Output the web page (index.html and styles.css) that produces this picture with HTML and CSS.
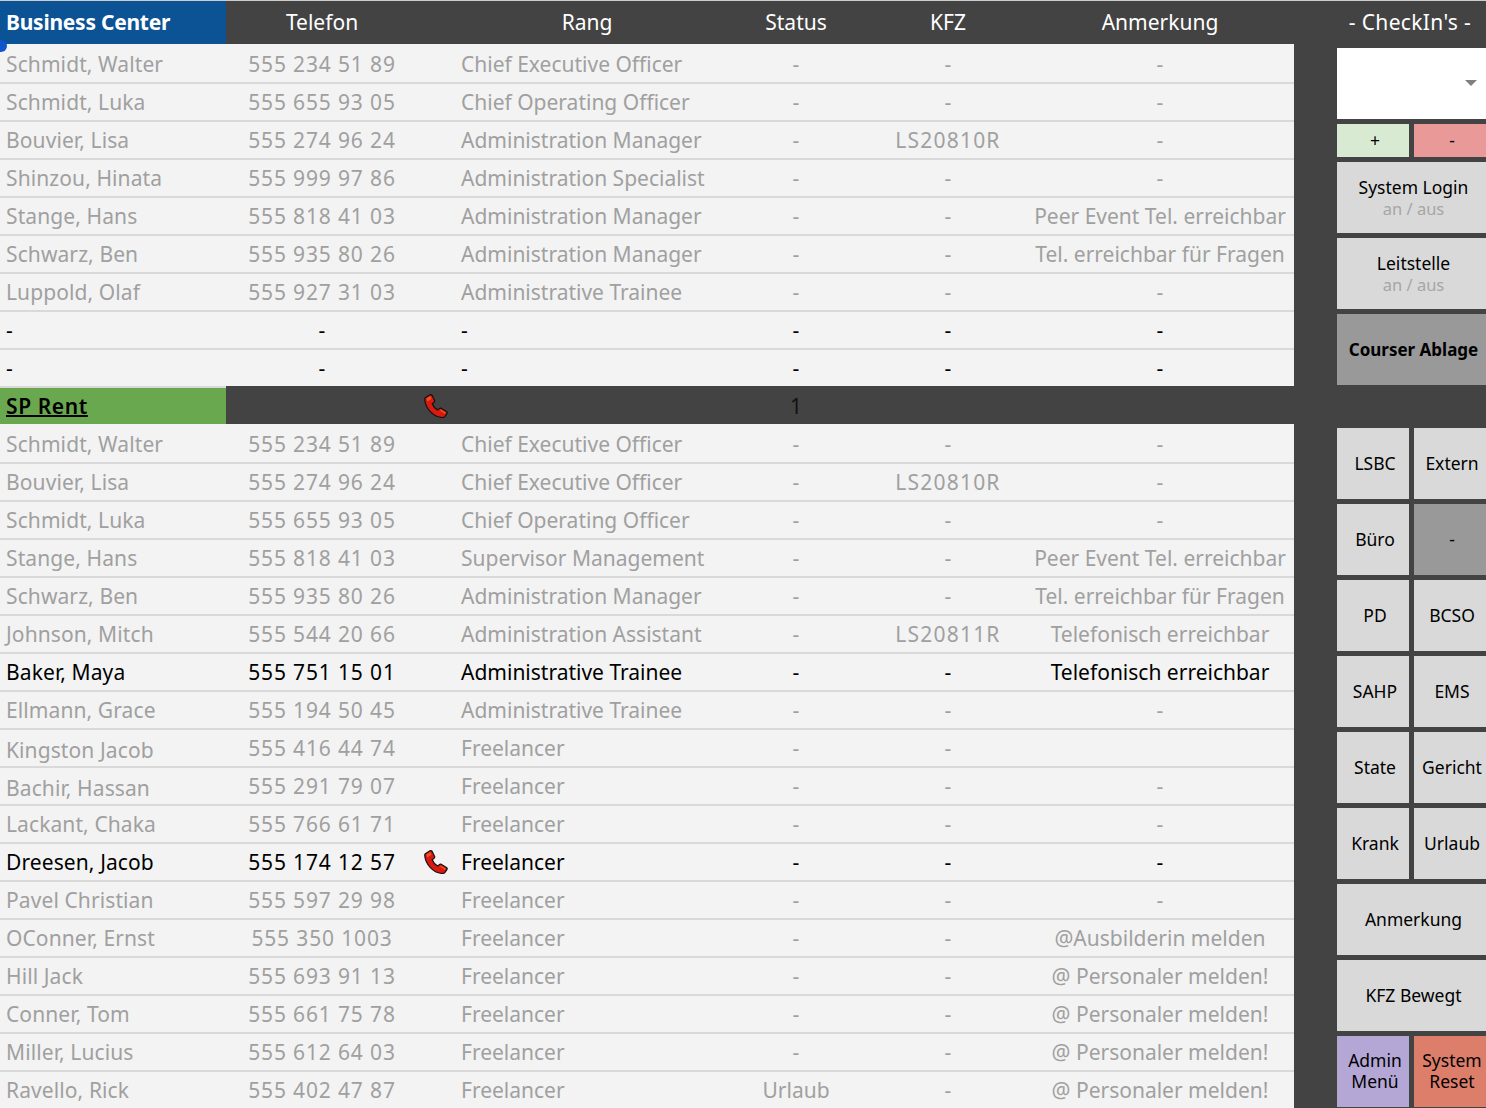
FILE: index.html
```html
<!DOCTYPE html>
<html lang="de">
<head>
<meta charset="utf-8">
<title>Business Center</title>
<link rel="stylesheet" href="styles.css">
</head>
<body>
<svg class="defs" width="0" height="0" aria-hidden="true"><defs>
<symbol id="phone" viewBox="0 0 24 24"><path d="M1 4 6 .8Q7.500 .3 8.200 1.600L10.600 6.400Q11 7.600 10 8.400L8.200 9.800Q9.500 13.500 13.600 16L15.400 14.600Q16.400 13.900 17.500 14.400L22.400 17.400Q23.600 18.200 23 19.400L21 22.400Q20 23.600 18.500 23.500C9 23 1.500 14 .8 6Q.7 4.800 1 4Z" fill="#d81a10" stroke="#111" stroke-width="1.200" stroke-linejoin="round"/><path d="M2.200 4.400 6.200 2 7.600 4.800 3.600 7.400ZM15.800 16.200 17 15.400 21.800 18.400 20.800 20Z" fill="#f0501e"/></symbol>
</defs></svg>
<div class="page">
  <header class="head">
    <div class="brand">Business Center</div>
    <div class="hc tel">Telefon</div>
    <div class="hc rang">Rang</div>
    <div class="hc">Status</div>
    <div class="hc">KFZ</div>
    <div class="hc note">Anmerkung</div>
    <div class="hc checkin">- CheckIn's -</div>
  </header>
  <span class="handle"></span>
  <div class="body">
    <main class="sheet">
      <div class="row first"><span>Schmidt, Walter</span><span class="c n">555 234 51 89</span><span></span><span>Chief Executive Officer</span><span class="c">-</span><span class="c">-</span><span class="c">-</span></div>
      <div class="row"><span>Schmidt, Luka</span><span class="c n">555 655 93 05</span><span></span><span>Chief Operating Officer</span><span class="c">-</span><span class="c">-</span><span class="c">-</span></div>
      <div class="row"><span>Bouvier, Lisa</span><span class="c n">555 274 96 24</span><span></span><span>Administration Manager</span><span class="c">-</span><span class="c n">LS20810R</span><span class="c">-</span></div>
      <div class="row"><span>Shinzou, Hinata</span><span class="c n">555 999 97 86</span><span></span><span>Administration Specialist</span><span class="c">-</span><span class="c">-</span><span class="c">-</span></div>
      <div class="row"><span>Stange, Hans</span><span class="c n">555 818 41 03</span><span></span><span>Administration Manager</span><span class="c">-</span><span class="c">-</span><span class="c">Peer Event Tel. erreichbar</span></div>
      <div class="row"><span>Schwarz, Ben</span><span class="c n">555 935 80 26</span><span></span><span>Administration Manager</span><span class="c">-</span><span class="c">-</span><span class="c">Tel. erreichbar für Fragen</span></div>
      <div class="row"><span>Luppold, Olaf</span><span class="c n">555 927 31 03</span><span></span><span>Administrative Trainee</span><span class="c">-</span><span class="c">-</span><span class="c">-</span></div>
      <div class="row on"><span>-</span><span class="c">-</span><span></span><span>-</span><span class="c">-</span><span class="c">-</span><span class="c">-</span></div>
      <div class="row on"><span>-</span><span class="c">-</span><span></span><span>-</span><span class="c">-</span><span class="c">-</span><span class="c">-</span></div>
      <div class="section"><a class="sec-name" href="#">SP Rent</a><span></span><span class="ico"><svg class="phone"><use href="#phone"/></svg></span><span></span><span class="c">1</span><span></span><span></span></div>
      <div class="row first"><span>Schmidt, Walter</span><span class="c n">555 234 51 89</span><span></span><span>Chief Executive Officer</span><span class="c">-</span><span class="c">-</span><span class="c">-</span></div>
      <div class="row"><span>Bouvier, Lisa</span><span class="c n">555 274 96 24</span><span></span><span>Chief Executive Officer</span><span class="c">-</span><span class="c n">LS20810R</span><span class="c">-</span></div>
      <div class="row"><span>Schmidt, Luka</span><span class="c n">555 655 93 05</span><span></span><span>Chief Operating Officer</span><span class="c">-</span><span class="c">-</span><span class="c">-</span></div>
      <div class="row"><span>Stange, Hans</span><span class="c n">555 818 41 03</span><span></span><span>Supervisor Management</span><span class="c">-</span><span class="c">-</span><span class="c">Peer Event Tel. erreichbar</span></div>
      <div class="row"><span>Schwarz, Ben</span><span class="c n">555 935 80 26</span><span></span><span>Administration Manager</span><span class="c">-</span><span class="c">-</span><span class="c">Tel. erreichbar für Fragen</span></div>
      <div class="row"><span>Johnson, Mitch</span><span class="c n">555 544 20 66</span><span></span><span>Administration Assistant</span><span class="c">-</span><span class="c n">LS20811R</span><span class="c">Telefonisch erreichbar</span></div>
      <div class="row on"><span>Baker, Maya</span><span class="c n">555 751 15 01</span><span></span><span>Administrative Trainee</span><span class="c">-</span><span class="c">-</span><span class="c">Telefonisch erreichbar</span></div>
      <div class="row"><span>Ellmann, Grace</span><span class="c n">555 194 50 45</span><span></span><span>Administrative Trainee</span><span class="c">-</span><span class="c">-</span><span class="c">-</span></div>
      <div class="row"><span class="low">Kingston Jacob</span><span class="c n">555 416 44 74</span><span></span><span>Freelancer</span><span class="c">-</span><span class="c">-</span><span class="c"></span></div>
      <div class="row"><span class="low">Bachir, Hassan</span><span class="c n">555 291 79 07</span><span></span><span>Freelancer</span><span class="c">-</span><span class="c">-</span><span class="c">-</span></div>
      <div class="row"><span>Lackant, Chaka</span><span class="c n">555 766 61 71</span><span></span><span>Freelancer</span><span class="c">-</span><span class="c">-</span><span class="c">-</span></div>
      <div class="row on"><span>Dreesen, Jacob</span><span class="c n">555 174 12 57</span><span class="ico"><svg class="phone"><use href="#phone"/></svg></span><span>Freelancer</span><span class="c">-</span><span class="c">-</span><span class="c">-</span></div>
      <div class="row"><span>Pavel Christian</span><span class="c n">555 597 29 98</span><span></span><span>Freelancer</span><span class="c">-</span><span class="c">-</span><span class="c">-</span></div>
      <div class="row"><span>OConner, Ernst</span><span class="c n">555 350 1003</span><span></span><span>Freelancer</span><span class="c">-</span><span class="c">-</span><span class="c">@Ausbilderin melden</span></div>
      <div class="row"><span>Hill Jack</span><span class="c n">555 693 91 13</span><span></span><span>Freelancer</span><span class="c">-</span><span class="c">-</span><span class="c">@ Personaler melden!</span></div>
      <div class="row"><span>Conner, Tom</span><span class="c n">555 661 75 78</span><span></span><span>Freelancer</span><span class="c">-</span><span class="c">-</span><span class="c">@ Personaler melden!</span></div>
      <div class="row"><span>Miller, Lucius</span><span class="c n">555 612 64 03</span><span></span><span>Freelancer</span><span class="c">-</span><span class="c">-</span><span class="c">@ Personaler melden!</span></div>
      <div class="row"><span>Ravello, Rick</span><span class="c n">555 402 47 87</span><span></span><span>Freelancer</span><span class="c">Urlaub</span><span class="c">-</span><span class="c">@ Personaler melden!</span></div>
    </main>
    <aside class="side">
      <div class="select wide"><span class="caret"></span></div>
      <div class="btn l plus">+</div>
      <div class="btn minus">-</div>
      <div class="btn wide">System Login<small>an / aus</small></div>
      <div class="btn wide">Leitstelle<small>an / aus</small></div>
      <div class="btn wide dark bold">Courser Ablage</div>
      <div class="spacer wide"></div>
      <div class="btn l">LSBC</div>
      <div class="btn">Extern</div>
      <div class="btn l">Büro</div>
      <div class="btn dark">-</div>
      <div class="btn l">PD</div>
      <div class="btn">BCSO</div>
      <div class="btn l">SAHP</div>
      <div class="btn">EMS</div>
      <div class="btn l">State</div>
      <div class="btn">Gericht</div>
      <div class="btn l">Krank</div>
      <div class="btn">Urlaub</div>
      <div class="btn wide">Anmerkung</div>
      <div class="btn wide">KFZ Bewegt</div>
      <div class="btn l purple">Admin<br>Menü</div>
      <div class="btn red">System<br>Reset</div>
    </aside>
  </div>
</div>
</body>
</html>
```
FILE: styles.css
```css
* { box-sizing: border-box; }
html, body { margin: 0; height: 100%; }
body {
  background: #434343;
  font-family: "Noto Sans", "Open Sans", sans-serif;
  overflow: hidden;
}
.defs { position: absolute; }
.page {
  position: relative;
  width: 1486px;
  height: 1108px;
  overflow: hidden;
  border-top: 1px solid #cccccc;
}
.head {
  display: grid;
  grid-template-columns: 226px 192px 36px 266px 152px 152px 272px 190px;
  height: 43px;
  color: #ffffff;
  font-size: 21px;
  line-height: 43px;
  background: #434343;
}
.brand {
  background: #0b5394;
  font-weight: 700;
  padding-left: 6px;
  white-space: nowrap;
  letter-spacing: -0.25px;
}
.hc { text-align: center; white-space: nowrap; }
.tel { grid-column: 2; }
.rang { grid-column: 3 / span 2; padding-left: 36px; }
.checkin { padding-left: 38px; letter-spacing: 0.35px; }
.handle {
  position: absolute;
  left: -5px;
  top: 39px;
  width: 12px;
  height: 12px;
  border-radius: 50%;
  background: #1155cc;
}
.body {
  display: grid;
  grid-template-columns: 1294px 153px;
  column-gap: 43px;
}
.sheet { display: flex; flex-direction: column; }
.row, .section {
  display: grid;
  grid-template-columns: 226px 192px 36px 266px 152px 152px 270px;
  height: 38px;
  align-items: center;
  font-size: 21px;
  white-space: nowrap;
}
.row {
  background: #f3f3f3;
  color: #a0a0a0;
  border-top: 2px solid #d9d9d9;
}
.row.first { border-top-color: #f3f3f3; }
.row.on { color: #000000; }
.row > span:first-child { padding-left: 6px; letter-spacing: 0.1px; }
.row > span:nth-child(4) { padding-left: 7px; }
.row > span:last-child { padding-left: 2px; }
.c { text-align: center; }
.n { letter-spacing: 0.85px; }
.row > .n:nth-child(6) { letter-spacing: 1.2px; }
.low { position: relative; top: 2px; }
.ico { display: flex; align-items: center; padding-left: 6px; }
.phone { width: 24px; height: 24px; display: block; }
.section { background: #434343; color: #111111; }
.section > .c, .section > .ico { padding-top: 2px; }
.sec-name {
  align-self: stretch;
  background: #6aa84f;
  border-top: 2px solid #d9d9d9;
  color: #000000;
  font-weight: 600;
  padding-left: 6px;
  line-height: 36px;
  letter-spacing: 0.6px;
  text-decoration-thickness: 2px;
}
.side {
  display: grid;
  grid-template-columns: 72px 76px;
  grid-template-rows: 71px 33px 71px 71px 71px 33px;
  grid-auto-rows: 71px;
  gap: 5px;
  padding-top: 4px;
  align-content: start;
}
.wide { grid-column: 1 / -1; }
.select { background: #ffffff; position: relative; }
.caret {
  position: absolute;
  right: 13px;
  top: 32px;
  border-left: 6px solid transparent;
  border-right: 6px solid transparent;
  border-top: 6px solid #808080;
}
.btn {
  background: #d9d9d9;
  color: #000000;
  font-size: 17.5px;
  line-height: 21px;
  text-align: center;
  display: flex;
  flex-direction: column;
  justify-content: center;
  align-items: center;
  white-space: nowrap;
}
.btn small { color: #a6a6a6; font-size: 16.5px; line-height: 21px; }
.l { padding-left: 4px; }
.plus { background: #d9ead3; }
.minus { background: #ea9999; }
.dark { background: #999999; }
.bold { font-weight: 700; font-size: 17px; }
.purple { background: #b4a7d6; }
.red { background: #dd7e6b; }
.purple, .red { padding-bottom: 2px; }
```
